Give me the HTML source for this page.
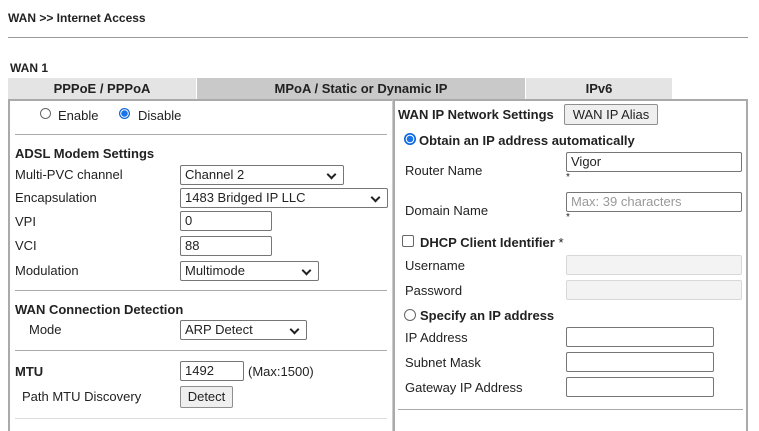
<html style="height:431px;overflow:hidden"><head><style>
body{margin:0;width:759px;height:431px;background:#fff;font-family:"Liberation Sans",Arial,sans-serif;font-size:13px;color:#222;position:relative;overflow:hidden}
.a{position:absolute;white-space:nowrap}
.b{font-weight:bold}
.inp{position:absolute;border:1px solid #767676;border-radius:2px;height:20px;box-sizing:border-box;background:#fff;font-size:13px;padding:1px 4px;line-height:16px}
.sel:after{content:"";position:absolute;right:8px;top:5px;width:5px;height:5px;border-right:2px solid #222;border-bottom:2px solid #222;transform:rotate(45deg)}
.dis{background:#f3f3f3;border-color:#d8d8d8}
.hr{position:absolute;height:1px;background:#aaa}
.btn{position:absolute;border:1px solid #8f8f8f;background:#efefef;border-radius:2px;box-sizing:border-box;text-align:center;font-size:13px}
.rad{position:absolute;width:11px;height:11px;border:1px solid #666;border-radius:50%;box-sizing:border-box}
.radon{border:1px solid #0b63d8;background:radial-gradient(circle,#1a73e8 0 3px,#fff 3.5px 4px,#1a73e8 4.5px)}
</style></head><body>
<div class="a b" style="left:8px;top:11px;font-size:12px">WAN &gt;&gt; Internet Access</div>
<div class="hr" style="left:8px;top:37px;width:740px;background:#999"></div>
<div class="a b" style="left:10px;top:61px;font-size:12px">WAN 1</div>
<div class="a b" style="left:8px;top:78px;width:188px;height:21px;background:#e4e4e4;text-align:center;line-height:21px">PPPoE / PPPoA</div>
<div class="a b" style="left:197px;top:78px;width:328px;height:21px;background:#c9c9c9;text-align:center;line-height:21px">MPoA / Static or Dynamic IP</div>
<div class="a b" style="left:526px;top:78px;width:146px;height:21px;background:#e4e4e4;text-align:center;line-height:21px">IPv6</div>
<div class="a" style="left:8px;top:99px;width:385px;height:332px;border:2px solid #aaa;border-bottom:0;border-right:1px solid #ccc;box-sizing:border-box"></div>
<div class="a" style="left:393px;top:99px;width:355px;height:332px;border:2px solid #aaa;border-bottom:0;box-sizing:border-box"></div>
<div class="rad" style="left:40px;top:108px"></div><div class="a" style="left:58px;top:108px">Enable</div>
<div class="rad radon" style="left:119px;top:108px"></div><div class="a" style="left:138px;top:108px">Disable</div>
<div class="hr" style="left:15px;top:134px;width:372px"></div>
<div class="a b" style="left:15px;top:146px">ADSL Modem Settings</div>
<div class="a" style="left:15px;top:167px">Multi-PVC channel</div>
<div class="inp sel" style="left:180px;top:165px;width:164px">Channel 2</div>
<div class="a" style="left:15px;top:190px">Encapsulation</div>
<div class="inp sel" style="left:180px;top:188px;width:208px">1483 Bridged IP LLC</div>
<div class="a" style="left:15px;top:214px">VPI</div>
<div class="inp" style="left:180px;top:211px;width:92px">0</div>
<div class="a" style="left:15px;top:238px">VCI</div>
<div class="inp" style="left:180px;top:236px;width:92px">88</div>
<div class="a" style="left:15px;top:263px">Modulation</div>
<div class="inp sel" style="left:180px;top:261px;width:139px">Multimode</div>
<div class="hr" style="left:15px;top:290px;width:372px"></div>
<div class="a b" style="left:15px;top:302px">WAN Connection Detection</div>
<div class="a" style="left:29px;top:322px">Mode</div>
<div class="inp sel" style="left:180px;top:320px;width:127px">ARP Detect</div>
<div class="hr" style="left:15px;top:350px;width:372px"></div>
<div class="a b" style="left:15px;top:364px">MTU</div>
<div class="inp" style="left:180px;top:361px;width:64px">1492</div>
<div class="a" style="left:248px;top:364px">(Max:1500)</div>
<div class="a" style="left:22px;top:389px">Path MTU Discovery</div>
<div class="btn" style="left:180px;top:386px;width:53px;height:22px;line-height:20px">Detect</div>
<div class="hr" style="left:15px;top:418px;width:372px;background:#ddd"></div>
<div class="a b" style="left:398px;top:107px">WAN IP Network Settings</div>
<div class="btn" style="left:564px;top:104px;width:94px;height:21px;line-height:19px">WAN IP Alias</div>
<div class="rad radon" style="left:404px;top:133px;width:12px;height:12px"></div><div class="a b" style="left:419px;top:133px">Obtain an IP address automatically</div>
<div class="a" style="left:405px;top:163px">Router Name</div>
<div class="inp" style="left:566px;top:152px;width:176px">Vigor</div><div class="a" style="left:566px;top:172px;font-size:10px">*</div>
<div class="a" style="left:405px;top:203px">Domain Name</div>
<div class="inp" style="left:566px;top:192px;width:176px;color:#999">Max: 39 characters</div><div class="a" style="left:566px;top:212px;font-size:10px">*</div>
<div class="a" style="left:402px;top:235px;width:12px;height:12px;border:1px solid #666;border-radius:2px;box-sizing:border-box"></div>
<div class="a" style="left:420px;top:235px"><b>DHCP Client Identifier</b> *</div>
<div class="a" style="left:405px;top:258px">Username</div>
<div class="inp dis" style="left:566px;top:255px;width:176px"></div>
<div class="a" style="left:405px;top:283px">Password</div>
<div class="inp dis" style="left:566px;top:280px;width:176px"></div>
<div class="rad" style="left:404px;top:309px;width:12px;height:12px"></div><div class="a b" style="left:420px;top:308px">Specify an IP address</div>
<div class="a" style="left:405px;top:330px">IP Address</div>
<div class="inp" style="left:566px;top:327px;width:148px"></div>
<div class="a" style="left:405px;top:355px">Subnet Mask</div>
<div class="inp" style="left:566px;top:352px;width:148px"></div>
<div class="a" style="left:405px;top:380px">Gateway IP Address</div>
<div class="inp" style="left:566px;top:377px;width:148px"></div>
<div class="hr" style="left:398px;top:409px;width:345px"></div>
</body></html>
